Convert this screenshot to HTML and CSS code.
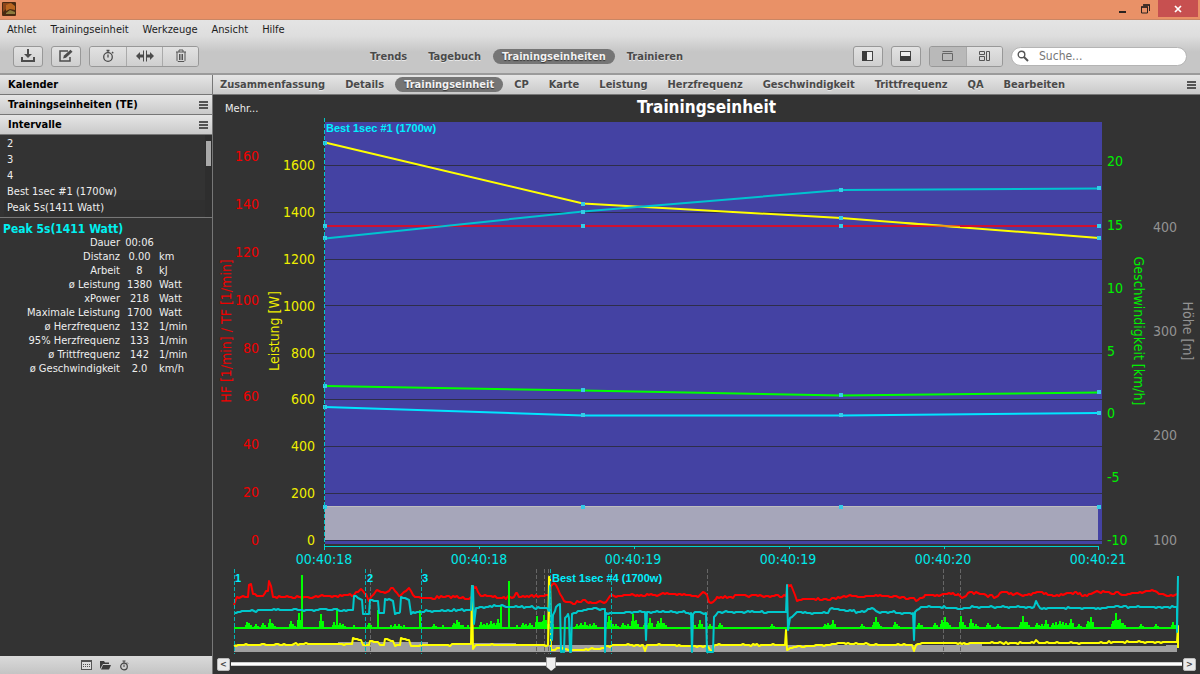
FILE: index.html
```html
<!DOCTYPE html>
<html lang="de">
<head>
<meta charset="utf-8">
<title>Trainingseinheit</title>
<link rel="stylesheet" href="styles.css">
</head>
<body>
<header class="titlebar">
  <svg class="app-icon" width="14" height="14" viewBox="0 0 14 14"><rect width="14" height="14" rx="1" fill="#4a2a12"/><path d="M1 1h8L5 6l-4 4z" fill="#8d4419"/><path d="M4 3l5-2 4 3v4l-5-1-4 2z" fill="#b9651f"/><path d="M4 11l4-3 5 2v2H4z" fill="#8d7a3c"/></svg>
  <div class="window-buttons">
    <button class="win" aria-label="Minimieren"><svg width="8" height="10"><rect y="7" width="7" height="2" fill="#2b2320"/></svg></button>
    <button class="win" aria-label="Wiederherstellen"><svg width="10" height="10"><path d="M.5 3h6v6h-6z M2.5 1h6v6" fill="none" stroke="#2b2320"/><path d="M0 3h7M2 1h7" stroke="#2b2320" stroke-width="1.5"/></svg></button>
    <button class="win close" aria-label="Schließen"><svg width="8" height="8"><path d="M1 1l6 6M7 1l-6 6" stroke="#fff" stroke-width="1.7"/></svg></button>
  </div>
</header>

<div class="chrome">
  <nav class="menubar" aria-label="Menü">
    <button>Athlet</button><button>Trainingseinheit</button><button>Werkzeuge</button><button>Ansicht</button><button>Hilfe</button>
  </nav>
  <div class="toolbar">
    <div class="tools">
      <button class="tool" aria-label="Herunterladen"><svg width="16" height="14" viewBox="0 0 16 14"><path d="M2 8v4h12V8" fill="none" stroke="#4c4c4c" stroke-width="2"/><path d="M7 0h2v5h3L8 9 4 5h3z" fill="#4c4c4c"/></svg></button>
      <button class="tool" aria-label="Bearbeiten"><svg width="16" height="14" viewBox="0 0 16 14"><path d="M10 2H2v10h10V8" fill="none" stroke="#4c4c4c" stroke-width="1.5"/><path d="M5 9.5l1-3L12.5.8l2 2L8 8.8z" fill="#4c4c4c"/></svg></button>
      <div class="group">
        <button class="tool wide" aria-label="Stoppuhr"><svg width="14" height="14" viewBox="0 0 14 14"><circle cx="7" cy="8" r="4.3" fill="none" stroke="#4c4c4c" stroke-width="1.3"/><path d="M5.5 1.5h3M7 1.5V4M7 5.5V8.5M11 3l1.3 1.3" fill="none" stroke="#4c4c4c" stroke-width="1.3"/></svg></button>
        <button class="tool wide" aria-label="Teilen"><svg width="18" height="14" viewBox="0 0 18 14"><path d="M7.500 1.500v11M10.500 1.500v11" stroke="#4c4c4c"/><path d="M0 7l4-4v2.500h3v3H4V11zM18 7l-4-4v2.500h-3v3h3V11z" fill="#4c4c4c"/></svg></button>
        <button class="tool wide" aria-label="Löschen"><svg width="12" height="14" viewBox="0 0 12 14"><path d="M1 3h10M4 3V1h4v2M2 3v8.5l1 1h6l1-1V3M4.5 5v6M6 5v6M7.5 5v6" fill="none" stroke="#555"/></svg></button>
      </div>
    </div>
    <nav class="views" aria-label="Ansichten">
      <button>Trends</button><button>Tagebuch</button><button class="active">Trainingseinheiten</button><button>Trainieren</button>
    </nav>
    <div class="layout-tools">
      <button class="tool" aria-label="Seitenleiste"><svg width="12" height="12"><rect x=".5" y="1.5" width="10" height="9" fill="#eee" stroke="#444"/><rect y="1" width="5" height="10" fill="#3c3c3c"/></svg></button>
      <button class="tool" aria-label="Unterer Bereich"><svg width="12" height="12"><rect x=".5" y="1.5" width="10" height="9" fill="#eee" stroke="#444"/><rect y="6" width="11" height="5" fill="#3c3c3c"/></svg></button>
      <div class="group">
        <button class="tool wide pressed" aria-label="Tabs"><svg width="12" height="12"><path d="M.5 3.5h10v7H.5zM.5 1.5h10" fill="none" stroke="#666"/></svg></button>
        <button class="tool wide" aria-label="Kacheln"><svg width="12" height="12"><path d="M.5 1.5h5v3h-5zM.5 6.5h5v4h-5zM7.5 1.5h3v9h-3z" fill="none" stroke="#555"/></svg></button>
      </div>
      <label class="search"><svg width="12" height="12" viewBox="0 0 12 12"><circle cx="4.5" cy="4.500" r="3.3" fill="none" stroke="#555" stroke-width="1.4"/><path d="M7 7l4 4" stroke="#555" stroke-width="2"/></svg><input type="text" placeholder="Suche..." aria-label="Suche"></label>
    </div>
  </div>
</div>

<main class="workspace">
  <aside class="sidebar">
    <h2 class="panel-head">Kalender</h2>
    <h2 class="panel-head">Trainingseinheiten (TE)<button class="burger" aria-label="Menü Trainingseinheiten"><i></i></button></h2>
    <h2 class="panel-head">Intervalle<button class="burger" aria-label="Menü Intervalle"><i></i></button></h2>
    <div class="interval-box">
      <ul class="intervals">
        <li>2</li><li>3</li><li>4</li><li>Best 1sec #1 (1700w)</li><li class="current">Peak 5s(1411 Watt)</li>
      </ul>
      <div class="scroll"><div class="thumb"></div></div>
    </div>
    <section class="details">
      <h3>Peak 5s(1411 Watt)</h3>
      <table>
        <tr><th scope="row">Dauer</th><td>00:06</td><td></td></tr>
        <tr><th scope="row">Distanz</th><td>0.00</td><td>km</td></tr>
        <tr><th scope="row">Arbeit</th><td>8</td><td>kJ</td></tr>
        <tr><th scope="row">ø Leistung</th><td>1380</td><td>Watt</td></tr>
        <tr><th scope="row">xPower</th><td>218</td><td>Watt</td></tr>
        <tr><th scope="row">Maximale Leistung</th><td>1700</td><td>Watt</td></tr>
        <tr><th scope="row">ø Herzfrequenz</th><td>132</td><td>1/min</td></tr>
        <tr><th scope="row">95% Herzfrequenz</th><td>133</td><td>1/min</td></tr>
        <tr><th scope="row">ø Trittfrequenz</th><td>142</td><td>1/min</td></tr>
        <tr><th scope="row">ø Geschwindigkeit</th><td>2.0</td><td>km/h</td></tr>
      </table>
    </section>
    <footer class="side-foot">
      <button aria-label="Kalender"><svg width="11" height="10"><rect x=".5" y=".5" width="10" height="9" fill="#ddd" stroke="#555"/><path d="M0 1.5h11" stroke="#555"/><path d="M2 4.500h7M2 6.500h7" stroke="#555" stroke-dasharray="1 1"/></svg></button>
      <button aria-label="Ordner"><svg width="11" height="10"><path d="M0 9V1h4l1 1.5h4V4H3z" fill="#3c3c3c"/><path d="M3 5h8L9 9.500H1z" fill="#3c3c3c"/></svg></button>
      <button aria-label="Zeit"><svg width="10" height="11"><circle cx="5" cy="6.5" r="3.3" fill="none" stroke="#444" stroke-width="1.2"/><path d="M3.5 1h3M5 1v2M5 4.500V7M8 2.500l1 1" stroke="#444"/></svg></button>
    </footer>
  </aside>

  <section class="content">
    <nav class="tabs" aria-label="Diagramme">
      <button>Zusammenfassung</button><button>Details</button><button class="active">Trainingseinheit</button><button>CP</button><button>Karte</button><button>Leistung</button><button>Herzfrequenz</button><button>Geschwindigkeit</button><button>Trittfrequenz</button><button>QA</button><button>Bearbeiten</button>
      <button class="burger" aria-label="Diagramm-Menü"><i></i></button>
    </nav>
    <div class="chart-head"><button class="more">Mehr...</button><h1>Trainingseinheit</h1></div>
    <svg class="chart" viewBox="213 118 987 536" role="img" aria-label="Verlauf der Trainingseinheit">
      <rect class="plot" x="325" y="122" width="777" height="422"/>
      <path class="altitude-block" d="M325 506h773v34H325z"/>
      <path d="M325 506.500h773" stroke="#bebebe"/>
      <path class="grid" d="M322 165.500h780M322 212.500h780M322 259.500h780M322 305.500h780M322 353.500h780M322 399.500h780M322 446.500h780M322 493.500h780M322 540.500h780"/>
      <g class="curves">
        <path stroke="#ff0" d="M325 142.500L583 203.500 841 218 1099 238"/>
        <path stroke="#cf1030" d="M325 226h774"/>
        <path stroke="#ff0" stroke-opacity=".6" d="M905 223L960 227"/>
        <path stroke="#00c3d0" d="M325 238.500L583 211.500 841 190 1099 188.500"/>
        <path stroke="#0f0" d="M325 386L583 390.500 841 395.500 1099 392.500"/>
        <path stroke="#00e5ff" d="M325 407L583 415.500 841 415.500 1099 413"/>
      </g>
      <g id="markers"></g>
      <path class="marker-line" d="M324.500 118v430"/>
      <path class="axis" d="M324 546.500h775M324.500 546v4M479.500 546v3M634.500 546v3M789.500 546v3M944.500 546v3M1098.500 546v4"/>
      <text class="event" x="326" y="132">Best 1sec #1 (1700w)</text>

      <g class="tick end red"><text x="259" y="161">160</text><text x="259" y="209">140</text><text x="259" y="257">120</text><text x="259" y="305">100</text><text x="259" y="353">80</text><text x="259" y="401">60</text><text x="259" y="449">40</text><text x="259" y="497">20</text><text x="259" y="545">0</text></g>
      <g class="tick end yellow"><text x="315" y="170">1600</text><text x="315" y="217">1400</text><text x="315" y="264">1200</text><text x="315" y="311">1000</text><text x="315" y="358">800</text><text x="315" y="404">600</text><text x="315" y="451">400</text><text x="315" y="498">200</text><text x="315" y="545">0</text></g>
      <g class="tick green"><text x="1107" y="166">20</text><text x="1107" y="230">15</text><text x="1107" y="293">10</text><text x="1107" y="356">5</text><text x="1107" y="418">0</text><text x="1107" y="482">-5</text><text x="1107" y="545">-10</text></g>
      <g class="tick grey"><text x="1153" y="232">400</text><text x="1153" y="336">300</text><text x="1153" y="440">200</text><text x="1153" y="545">100</text></g>
      <g class="tick mid cyan"><text x="324" y="564">00:40:18</text><text x="479" y="564">00:40:18</text><text x="633" y="564">00:40:19</text><text x="788" y="564">00:40:19</text><text x="943" y="564">00:40:20</text><text x="1098" y="564">00:40:21</text></g>
      <g class="tick mid">
        <text class="red" transform="translate(231 331) rotate(-90)">HF [1/min] / TF [1/min]</text>
        <text class="yellow" transform="translate(279 331) rotate(-90)">Leistung [W]</text>
        <text class="green" transform="translate(1134 331) rotate(90)">Geschwindigkeit [km/h]</text>
        <text class="grey" transform="translate(1183 331) rotate(90)">Höhe [m]</text>
      </g>

      <path fill="#a0a0a0" d="M234 652v-7h104v-3h90v3h32v-2h56v2h448v-1h18v2h184v-1h11v7z"/>
      <path class="lap grey-lap" d="M370.500 569v87M536.500 569v87M544.500 569v87M548.500 569v87M707.500 569v87M943.500 569v87M960.500 569v87"/>
      <g id="overview"></g>
      <path class="lap" d="M234.500 569v87M365.500 569v87M421.500 569v87M550.500 569v87M611.500 569v87"/>
      <g class="event"><text x="235" y="582">1</text><text x="367" y="582">2</text><text x="422" y="582">3</text><text x="552" y="582">Best 1sec #4 (1700w)</text></g>
    </svg>
    <div class="range">
      <button aria-label="Zurück">&lt;</button>
      <input type="range" min="0" max="1000" value="335" aria-label="Position">
      <button aria-label="Vor">&gt;</button>
    </div>
  </section>
</main>
<script src="chart.js"></script>
</body>
</html>
```
FILE: styles.css
```css
* { box-sizing: border-box; }
body {
  margin: 0;
  min-height: 100vh;
  display: flex;
  flex-direction: column;
  background: #333;
  color: #eee;
  font: 11px/14px "DejaVu Sans Condensed", "DejaVu Sans", sans-serif;
}
button { font: inherit; color: inherit; background: none; border: 0; padding: 0; margin: 0; }
svg { display: block; }

.titlebar { display: flex; justify-content: space-between; height: 20px; padding: 0 2px; background: #e99167; border-bottom: 1px solid #c98664; }
.app-icon { margin-top: 2px; }
.window-buttons { display: flex; height: 17px; }
.win { width: 23px; display: grid; place-items: center; }
.win.close { width: 40px; margin-left: 1px; background: #c75050; }

.chrome { background: linear-gradient(#e4e4e4, #dedede 30%, #c6c6c6 60%, #c6c6c6); border-bottom: 2px solid #9b9b9b; color: #1c1c1c; }
.menubar { display: flex; gap: 14px; height: 19px; padding: 0 7px; }
.toolbar { display: flex; align-items: center; height: 34px; padding: 0 13px; }
.tools, .layout-tools { display: flex; align-items: center; gap: 8px; }
.tool { height: 21px; width: 30px; display: grid; place-items: center; border: 1px solid #989898; border-radius: 3px; background: linear-gradient(#e2e2e2, #cfcfcf); }
.group { display: flex; border: 1px solid #989898; border-radius: 3px; overflow: hidden; }
.group .tool { height: 19px; width: 36px; border: 0; border-radius: 0; border-left: 1px solid #aaa; }
.group .tool:first-child { border-left: 0; }
.group .pressed { background: #b9b9b9; }
.views { display: flex; gap: 3px; margin-left: 162px; }
.views button, .tabs button { font-weight: bold; color: #4a4a4a; text-shadow: 0 1px 0 #e8e8e8; height: 15px; line-height: 15px; border-radius: 8px; }
.views button { padding: 0 9px; }
.tabs button { padding: 0 7px; }
.views .active, .tabs .active { background: #757575; color: #f2f2f2; text-shadow: 0 1px 1px #333; }
.tabs .active { padding: 0 9px; margin: 0 -2px; }
.layout-tools { margin-left: auto; }
.search { display: flex; align-items: center; gap: 10px; width: 176px; height: 19px; padding: 0 5px; background: #fff; border: 1px solid #b4b4b4; border-radius: 10px; }
.search input { flex: 1; min-width: 0; border: 0; padding: 0; outline: 0; background: none; font: inherit; font-size: 12px; }
.search input::placeholder { color: #777; }

.workspace { flex: 1; display: flex; min-height: 0; }
.sidebar { width: 213px; flex: none; display: flex; flex-direction: column; border-right: 1px solid #777; }
.panel-head, .tabs { background: linear-gradient(#e6e6e6, #c9c9c9); border-bottom: 1px solid #777; height: 20px; }
.panel-head { display: flex; justify-content: space-between; align-items: center; margin: 0; padding: 0 4px 0 8px; font-size: 11px; color: #000; }
.burger i { display: block; width: 9px; height: 8px; background: repeating-linear-gradient(#555 0 2px, transparent 2px 3px); }

.interval-box { display: flex; border-bottom: 1px solid #777; }
.intervals { flex: 1; list-style: none; margin: 0; padding: 1px 0 1px 4px; }
.intervals li { line-height: 16px; padding-left: 3px; }
.intervals .current { background: #303030; }
.scroll { width: 7px; padding: 6px 1px 0; background: #2e2e2e; }
.thumb { height: 25px; background: #a9a9a9; }
.details { flex: 1; padding: 4px 3px; }
.details h3 { margin: 0; font-size: 12px; line-height: 14px; color: #00f0f0; }
.details table { border-collapse: collapse; }
.details th, .details td { padding: 0; height: 14px; font-weight: normal; }
.details th { width: 117px; text-align: right; }
.details td { width: 39px; text-align: center; }
.details td:last-child { text-align: left; }
.side-foot { display: flex; justify-content: center; align-items: center; gap: 8px; height: 18px; padding-right: 2px; background: linear-gradient(#dadada, #c4c4c4); }

.content { flex: 1; min-width: 0; display: flex; flex-direction: column; }
.tabs { display: flex; align-items: center; gap: 6px; }
.tabs .burger { margin-left: auto; padding: 0 4px; border-radius: 0; display: flex; align-items: center; }
.chart-head { display: grid; grid-template-columns: 1fr auto 1fr; align-items: center; height: 23px; padding: 0 12px; }
.more { justify-self: start; padding-top: 4px; }
.chart-head h1 { margin: 0; font-size: 17px; line-height: 20px; color: #fff; }
.chart { flex: 1; width: 100%; min-height: 0; }

.plot { fill: #4442a3; }
.altitude-block { fill: #a6a6ba; }
.grid { stroke: #2e2e4a; }
.curves path { fill: none; stroke-width: 2; }
.marker-line { stroke: #00c8c8; stroke-dasharray: 4 2; }
.axis { fill: none; stroke: #00d0d0; }
.event { font: bold 11px "Liberation Sans", sans-serif; fill: #00f0ff; }
.tick { font-size: 14px; }
.end { text-anchor: end; }
.mid { text-anchor: middle; }
.red { fill: #f00000; }
.yellow { fill: #eeee00; }
.green { fill: #00f000; }
.grey { fill: #929292; }
.cyan { fill: #00e8e8; }
.lap { stroke: #00b4b4; stroke-dasharray: 4 2; }
.grey-lap { stroke: #666; }
.trace { fill: none; stroke-width: 2; stroke-linejoin: round; }

.range { display: flex; align-items: center; height: 20px; padding: 0 4px; gap: 1px; }
.range button { width: 13px; height: 13px; line-height: 11px; font-size: 9px; font-weight: bold; color: #444; background: #eaeaea; border: 1px solid #bbb; border-radius: 2px; }
.range input { flex: 1; appearance: none; height: 14px; margin: 0; background: linear-gradient(#999, #fff 1px, #fff 3px, #999) center / 100% 4px no-repeat; }
.range input::-webkit-slider-thumb { appearance: none; width: 10px; height: 14px; background: #eee; border: 1px solid #999; clip-path: polygon(0 0, 100% 0, 100% 70%, 50% 100%, 0 70%); }
```
FILE: chart.js
```js
const NS = "http://www.w3.org/2000/svg";
function add(parent, tag, attrs) {
  const el = document.createElementNS(NS, tag);
  for (const key in attrs) el.setAttribute(key, attrs[key]);
  parent.appendChild(el);
}

const markers = document.getElementById("markers");
const samples = [
  [325, 143, 226, 238, 386, 407, 507],
  [583, 204, 226, 212, 390, 415, 507],
  [841, 218, 226, 190, 395, 415, 507],
  [1099, 238, 226, 188, 392, 413, 507]
];
for (const [x, ...ys] of samples)
  for (const y of ys) add(markers, "rect", { x: x - 2, y: y - 2, width: 4, height: 4, fill: "#35cbe6" });

let seed = 7;
function rnd() { seed = (seed * 16807) % 2147483647; return seed / 2147483647; }

// Joins key points with small noise every two pixels; steep steps stay clean.
function trace(text, color, noise) {
  const pts = text.trim().split(/\s+/).map(p => p.split(",").map(Number));
  let d = "M" + pts[0];
  for (let i = 1; i < pts.length; i++) {
    const [x0, y0] = pts[i - 1], [x1, y1] = pts[i];
    for (let x = x0 + 2; x < x1; x += 2) {
      const y = y0 + (y1 - y0) * (x - x0) / (x1 - x0) + Math.round((rnd() - 0.5) * 2 * noise);
      d += "L" + x + "," + y.toFixed(0);
    }
    d += "L" + x1 + "," + y1;
  }
  add(document.getElementById("overview"), "path", { d, stroke: color, class: "trace" });
}

trace(`234,605 237,597 248,597 249,585 251,584 253,594 263,596 266,591 268,591 269,581 271,586 273,597 300,597 330,596
354,595 361,589 366,594 369,601 372,596 377,590 385,593 393,588 400,596 409,588 415,597 425,598 445,597 470,598 472,597
473,586 476,587 481,596 500,598 514,597 517,593 519,597 530,596 549,596 551,586 554,583 558,589 564,601 573,604 583,600
590,602 606,602 610,596 637,595 680,594 698,597 703,592 707,595 709,602 714,601 717,597 750,596 786,596 788,585 791,585
797,601 808,599 830,600 838,597 850,595 860,597 880,595 910,598 918,600 925,595 958,594 962,598 970,592 980,594 996,597
1003,592 1015,594 1025,595 1038,592 1053,596 1065,594 1076,592 1083,596 1097,591 1110,593 1130,594 1155,591 1167,596 1177,594`, "#ff0000", 1);

// Speed: short spikes rise from a constant base line, with a low shoulder beside the taller ones.
const spikes = {247:6,249:5,256:4,263:5,270:9,273:4,291:7,293:4,299:15,302:53,321:14,334:6,337:20,340:5,343:4,354:3,369:5,378:18,391:3,
395:4,399:4,404:3,420:18,434:4,443:3,454:5,457:8,459:6,463:3,468:3,481:6,484:4,487:5,491:7,494:5,498:9,501:23,509:47,517:3,523:5,
526:4,530:5,537:12,541:6,544:13,546:8,551:8,577:4,581:5,585:6,590:4,594:5,609:12,611:8,616:4,623:5,628:4,633:14,636:8,645:5,650:10,
658:7,661:10,664:5,693:6,700:8,710:4,720:5,772:4,825:4,828:5,833:8,862:4,874:6,876:11,879:4,895:6,897:4,919:5,922:3,935:5,
942:8,945:11,948:5,961:12,965:3,971:9,976:4,988:5,998:4,1021:6,1023:12,1027:6,1037:5,1042:4,1046:8,1053:5,1056:6,1060:7,1063:6,1066:5,
1071:9,1079:4,1088:7,1091:11,1113:7,1116:15,1120:9,1123:5,1141:4,1156:4,1173:6};
let green = "M234,628H1177";
for (const x of Object.keys(spikes).map(Number)) {
  const h = spikes[x];
  green += `M${x},628v${-h}`;
  if (h > 3 && h < 16) green += `M${x + 2},628v${-Math.ceil(h / 2)}M${x - 1},628v${-Math.ceil(h / 2)}`;
}
add(document.getElementById("overview"), "path", { d: green, stroke: "#00ff00", class: "trace" });

trace(`234,645 352,644 353,638 361,640 363,645 369,645 370,641 378,642 380,645 384,645 385,639 393,641 395,646 400,645
401,638 409,640 411,646 430,645 471,644 472,586 473,649 476,645 548,645 549,577 550,577 551,650 560,648 570,650 600,649
612,645 643,645 645,651 647,645 707,646 712,652 715,645 785,645 786,630 787,650 790,648 800,646 828,645 840,643 880,645
912,645 914,651 916,645 922,643 1034,643 1036,640 1039,643 1177,642 1178,626 1178,648`, "#ffff00", 0.6);
trace(`234,613 242,611 250,611 262,610 353,610 354,596 362,600 363,614 369,614 370,600 378,601 379,613 384,613 385,599
393,601 395,614 400,612 401,597 409,600 411,614 418,612 430,611 471,610 472,586 473,586 474,624 476,608 490,606 547,608
549,611 550,586 552,640 553,615 556,607 560,604 561,652 564,652 565,618 568,614 569,618 570,652 571,652 572,614 580,611
590,609 605,609 605,652 606,613 645,612 646,640 647,612 680,612 691,613 692,652 693,614 696,612 706,613 707,652 713,652
714,617 718,612 780,612 786,612 787,585 788,630 790,618 797,612 810,613 828,613 830,609 860,612 872,608 878,612 913,613
914,640 915,612 921,607 940,607 962,609 975,607 1010,607 1034,607 1036,601 1040,608 1177,607 1177,632 1178,576`, "#00c8cc", 0.7);
```
